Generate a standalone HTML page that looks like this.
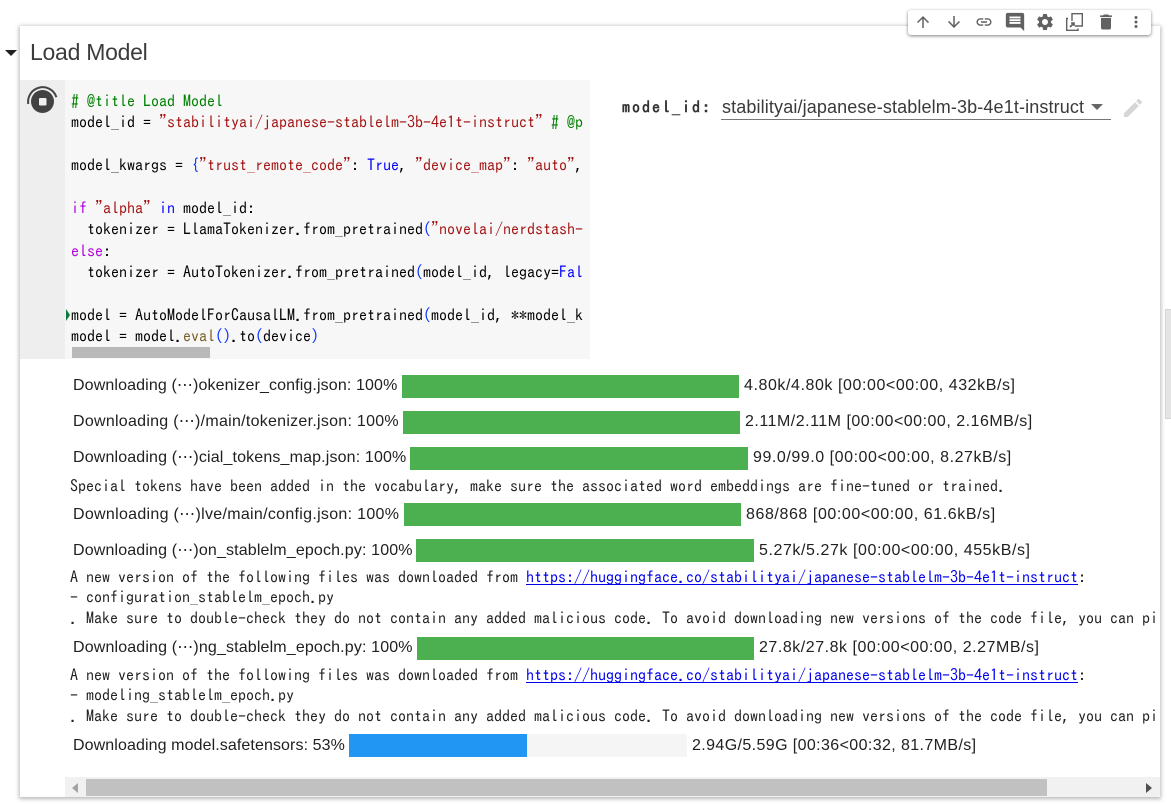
<!DOCTYPE html>
<html><head><meta charset="utf-8"><style>
html,body{margin:0;padding:0;width:1171px;height:804px;overflow:hidden;background:#fff}
.a{position:absolute}
.t{position:absolute;white-space:pre;font-family:"Liberation Sans",sans-serif;color:#212121;font-size:16px;line-height:20px;letter-spacing:.1px}
.m{position:absolute;white-space:pre;font-family:IPAGothic,"Liberation Mono",monospace;font-size:16px;line-height:20px;color:#212121}
.c{color:#000}.g{color:#008000}.r{color:#a31515}.b{color:#00f}.br{color:#0431fa}.pk{color:#af00db}.y{color:#795e26}
.bar{position:absolute;background:#4caf50;height:23px}
svg{position:absolute}
</style></head><body>
<div class="a" style="left:20px;top:26px;width:1140px;height:771px;background:#fff;box-shadow:0 1px 4px 1px rgba(0,0,0,.28)"></div>
<div class="a" style="left:1165px;top:309px;width:6px;height:110px;background:#e4e4e4;border:1px solid #d4d4d4;box-sizing:border-box;border-right:0"></div>
<div class="a" style="left:5px;top:50px;width:0;height:0;border-left:6px solid transparent;border-right:6px solid transparent;border-top:6px solid #212121"></div>
<div class="t" style="left:30px;top:38px;font-size:23px;line-height:28px;color:#3c3c3c;letter-spacing:-.27px">Load Model</div>

<div class="a" style="left:20px;top:80px;width:45px;height:279px;background:#eee"></div>
<div class="a" style="left:65px;top:80px;width:525px;height:279px;background:#f7f7f7;overflow:hidden">
<div class="m" style="left:6px;top:11px;line-height:21.4px;width:512px;overflow:hidden;height:258px;"><span class="g"># @title Load Model</span>
<span class="c">model_id = </span><span class="r">"stabilityai/japanese-stablelm-3b-4e1t-instruct"</span><span class="c"> </span><span class="g"># @p</span>

<span class="c">model_kwargs = </span><span class="br">{</span><span class="r">"trust_remote_code"</span><span class="c">: </span><span class="b">True</span><span class="c">, </span><span class="r">"device_map"</span><span class="c">: </span><span class="r">"auto"</span><span class="c">,</span>

<span class="pk">if</span><span class="c"> </span><span class="r">"alpha"</span><span class="c"> </span><span class="b">in</span><span class="c"> model_id:</span>
<span class="c">  tokenizer = LlamaTokenizer.from_pretrained</span><span class="br">(</span><span class="r">"novelai/nerdstash-</span>
<span class="pk">else</span><span class="c">:</span>
<span class="c">  tokenizer = AutoTokenizer.from_pretrained</span><span class="br">(</span><span class="c">model_id, legacy=</span><span class="b">Fal</span>

<span class="c">model = AutoModelForCausalLM.from_pretrained</span><span class="br">(</span><span class="c">model_id, **model_k</span>
<span class="c">model = model.</span><span class="y">eval</span><span class="br">()</span><span class="c">.to</span><span class="br">(</span><span class="c">device</span><span class="br">)</span></div>
<div class="a" style="left:7px;top:267px;width:138px;height:11px;background:#b9b9b9"></div>
</div>
<div class="a" style="left:66px;top:309px;width:0;height:0;border-left:4px solid #0a7a3a;border-top:6px solid transparent;border-bottom:6px solid transparent"></div>
<svg style="left:27px;top:85px" width="32" height="30" viewBox="0 0 32 30"><path d="M1.3 19A14.5 14.5 0 0 1 29.4 12.2" fill="none" stroke="#444" stroke-width="2"/><circle cx="15.5" cy="16.5" r="11.5" fill="#424242"/><rect x="12" y="13" width="7.5" height="7.5" fill="#f0f0f0" rx="1"/></svg>

<div class="m" style="left:622px;top:97px;font-weight:bold;letter-spacing:2px;color:#333;">model_id:</div>
<div class="t" style="left:722px;top:97px;font-size:18px;letter-spacing:.13px;color:#3a3a3a">stabilityai/japanese-stablelm-3b-4e1t-instruct</div>
<div class="a" style="left:721px;top:119px;width:390px;height:1px;background:#767676"></div>
<div class="a" style="left:1091px;top:104px;width:0;height:0;border-left:6px solid transparent;border-right:6px solid transparent;border-top:6px solid #666"></div>
<svg style="left:1121px;top:96px" width="24" height="24" viewBox="0 0 24 24"><path d="M3 17.25V21h3.75L17.81 9.94l-3.75-3.75L3 17.25zM20.71 7.04a1 1 0 0 0 0-1.41l-2.34-2.34a1 1 0 0 0-1.41 0l-1.83 1.83 3.75 3.75 1.83-1.83z" fill="#d6d6d6"/></svg>

<div class="a" style="left:908px;top:10px;width:243px;height:25px;background:#fff;border-radius:3px;box-shadow:0 1px 3px rgba(0,0,0,.5)"></div>
<svg style="left:914px;top:13px" width="18" height="18" viewBox="0 0 24 24"><path d="M4 12l1.41 1.41L11 7.83V20h2V7.83l5.58 5.59L20 12l-8-8-8 8z" fill="#616161"/></svg>
<svg style="left:945px;top:13px" width="18" height="18" viewBox="0 0 24 24"><path d="M20 12l-1.41-1.41L13 16.17V4h-2v12.17l-5.58-5.59L4 12l8 8 8-8z" fill="#616161"/></svg>
<svg style="left:975px;top:13px" width="18" height="18" viewBox="0 0 24 24"><path d="M3.9 12c0-1.71 1.39-3.1 3.1-3.1h4V7H7c-2.76 0-5 2.24-5 5s2.24 5 5 5h4v-1.9H7c-1.71 0-3.1-1.39-3.1-3.1zM8 13h8v-2H8v2zm9-6h-4v1.9h4c1.71 0 3.1 1.39 3.1 3.1s-1.39 3.1-3.1 3.1h-4V17h4c2.76 0 5-2.24 5-5s-2.24-5-5-5z" fill="#616161"/></svg>
<svg style="left:1004px;top:11px" width="22" height="22" viewBox="0 0 24 24"><path d="M21.99 4c0-1.1-.89-2-1.99-2H4c-1.1 0-2 .9-2 2v12c0 1.1.9 2 2 2h14l4 4-.01-18zM18 14H6v-2h12v2zm0-3H6V9h12v2zm0-3H6V6h12v2z" fill="#616161"/></svg>
<svg style="left:1035px;top:12px" width="20" height="20" viewBox="0 0 24 24"><path d="M19.14 12.94c.04-.3.06-.61.06-.94s-.02-.64-.07-.94l2.03-1.58a.49.49 0 0 0 .12-.61l-1.92-3.32a.49.49 0 0 0-.59-.22l-2.39.96c-.5-.38-1.03-.7-1.62-.94l-.36-2.54a.48.48 0 0 0-.48-.41h-3.84c-.24 0-.43.17-.47.41l-.36 2.54c-.59.24-1.13.57-1.62.94l-2.39-.96a.48.48 0 0 0-.59.22L2.74 8.87c-.12.21-.08.47.12.61l2.03 1.58c-.05.3-.09.63-.09.94s.02.64.07.94l-2.03 1.58a.49.49 0 0 0-.12.61l1.92 3.32c.12.22.37.29.59.22l2.39-.96c.5.38 1.03.7 1.62.94l.36 2.54c.05.24.24.41.48.41h3.84c.24 0 .44-.17.47-.41l.36-2.54c.59-.24 1.13-.56 1.62-.94l2.39.96c.22.08.47 0 .59-.22l1.92-3.32a.48.48 0 0 0-.12-.61l-2.01-1.58zM12 15.6A3.6 3.6 0 1 1 12 8.4a3.6 3.6 0 0 1 0 7.2z" fill="#616161"/></svg>
<svg style="left:1065px;top:12px" width="20" height="20" viewBox="0 0 20 20" fill="none" stroke="#616161" stroke-width="1.4"><path d="M7 9V1.7h10.3V14H10"/><path d="M3 6.5H1.7V18.3H13V16.5"/><path d="M5 15l4-4M6 11h3v3" stroke-width="1.6"/></svg>
<svg style="left:1096px;top:12px" width="20" height="20" viewBox="0 0 24 24"><path d="M6 19c0 1.1.9 2 2 2h8c1.1 0 2-.9 2-2V7H6v12zM19 4h-3.5l-1-1h-5l-1 1H5v2h14V4z" fill="#616161"/></svg>
<svg style="left:1127px;top:13px" width="18" height="18" viewBox="0 0 24 24"><path d="M12 8a2 2 0 1 0 0-4 2 2 0 0 0 0 4zm0 2a2 2 0 1 0 0 4 2 2 0 0 0 0-4zm0 6a2 2 0 1 0 0 4 2 2 0 0 0 0-4z" fill="#616161"/></svg>

<div class="t" style="left:73px;top:376px;letter-spacing:.125px">Downloading (⋯)okenizer_config.json: 100%</div>
<div class="bar" style="left:402px;top:375px;width:337px"></div>
<div class="t" style="left:744px;top:376px;letter-spacing:.57px">4.80k/4.80k [00:00&lt;00:00, 432kB/s]</div>
<div class="t" style="left:73px;top:412px;letter-spacing:.27px">Downloading (⋯)/main/tokenizer.json: 100%</div>
<div class="bar" style="left:403px;top:411px;width:337px"></div>
<div class="t" style="left:745px;top:412px;letter-spacing:.5px">2.11M/2.11M [00:00&lt;00:00, 2.16MB/s]</div>
<div class="t" style="left:73px;top:448px;letter-spacing:.15px">Downloading (⋯)cial_tokens_map.json: 100%</div>
<div class="bar" style="left:410px;top:447px;width:338px"></div>
<div class="t" style="left:753px;top:448px;letter-spacing:.55px">99.0/99.0 [00:00&lt;00:00, 8.27kB/s]</div>
<div class="m" style="left:70px;top:476px">Special tokens have been added in the vocabulary, make sure the associated word embeddings are fine-tuned or trained.</div>
<div class="t" style="left:73px;top:505px;letter-spacing:.3px">Downloading (⋯)lve/main/config.json: 100%</div>
<div class="bar" style="left:404px;top:503px;width:337px"></div>
<div class="t" style="left:746px;top:505px;letter-spacing:.58px">868/868 [00:00&lt;00:00, 61.6kB/s]</div>
<div class="t" style="left:73px;top:541px;letter-spacing:.15px">Downloading (⋯)on_stablelm_epoch.py: 100%</div>
<div class="bar" style="left:416px;top:539px;width:338px"></div>
<div class="t" style="left:759px;top:541px;letter-spacing:.57px">5.27k/5.27k [00:00&lt;00:00, 455kB/s]</div>
<div class="a" style="left:70px;top:567px;width:1088px;height:160px;overflow:hidden">
<div class="m" style="left:0;top:0">A new version of the following files was downloaded from <span style="color:#00e;text-decoration:underline">https://huggingface.co/stabilityai/japanese-stablelm-3b-4e1t-instruct</span>:</div>
<div class="m" style="left:0;top:20px">- configuration_stablelm_epoch.py</div>
<div class="m" style="left:0;top:41px">. Make sure to double-check they do not contain any added malicious code. To avoid downloading new versions of the code file, you can pin a revision.</div>
<div class="m" style="left:0;top:98px">A new version of the following files was downloaded from <span style="color:#00e;text-decoration:underline">https://huggingface.co/stabilityai/japanese-stablelm-3b-4e1t-instruct</span>:</div>
<div class="m" style="left:0;top:118px">- modeling_stablelm_epoch.py</div>
<div class="m" style="left:0;top:139px">. Make sure to double-check they do not contain any added malicious code. To avoid downloading new versions of the code file, you can pin a revision.</div>
</div>
<div class="t" style="left:73px;top:638px;letter-spacing:.15px">Downloading (⋯)ng_stablelm_epoch.py: 100%</div>
<div class="bar" style="left:417px;top:637px;width:337px"></div>
<div class="t" style="left:759px;top:638px;letter-spacing:.53px">27.8k/27.8k [00:00&lt;00:00, 2.27MB/s]</div>
<div class="t" style="left:73px;top:736px">Downloading model.safetensors: 53%</div>
<div class="a" style="left:349px;top:734px;width:338px;height:23px;background:#f5f5f5"></div>
<div class="a" style="left:349px;top:734px;width:178px;height:23px;background:#2196f3"></div>
<div class="t" style="left:692px;top:736px;letter-spacing:.39px">2.94G/5.59G [00:36&lt;00:32, 81.7MB/s]</div>

<div class="a" style="left:65px;top:777px;width:1095px;height:20px;background:#f1f1f1"></div>
<div class="a" style="left:86px;top:779px;width:961px;height:17px;background:#c1c1c1"></div>
<div class="a" style="left:72px;top:783px;width:0;height:0;border-right:6px solid #a3a3a3;border-top:5px solid transparent;border-bottom:5px solid transparent"></div>
<div class="a" style="left:1146px;top:783px;width:0;height:0;border-left:6px solid #505050;border-top:5px solid transparent;border-bottom:5px solid transparent"></div>
</body></html>
